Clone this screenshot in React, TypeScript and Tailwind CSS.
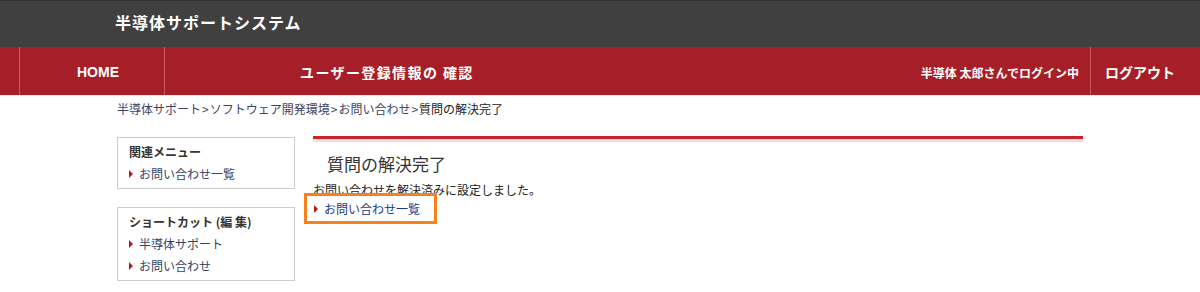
const jp = "font-['Noto_Sans_CJK_JP','Noto_Sans',sans-serif]";

const Tri = () => (
  <span className="mr-[6px] inline-block h-0 w-0 border-y-[4px] border-l-[4px] border-y-transparent border-l-[#c0141c]" />
);

const SideBox = ({ title, items }: { title: string; items: string[] }) => (
  <div className="border border-[#cccccc] px-[11px] pt-[3px] pb-[3px]">
    <div className="text-[12px] font-bold leading-[22px] text-[#333333]">{title}</div>
    {items.map((item) => (
      <div key={item} className="flex items-center text-[12px] leading-[22px] text-[#334466]">
        <Tri />
        {item}
      </div>
    ))}
  </div>
);

const crumbs = ["半導体サポート", "ソフトウェア開発環境", "お問い合わせ"];

export default function App() {
  return (
    <div className={`${jp} min-h-[292px] bg-white`}>
      {/* top header */}
      <div className="h-[47px] border-t border-[#333333] bg-[#404040]">
        <div className="mx-auto w-[970px] text-[16px] font-bold leading-[43px] tracking-[1px] text-white">
          半導体サポートシステム
        </div>
      </div>

      {/* nav */}
      <div className="flex h-[49px] border-b border-[#e8e8e8] bg-[#a61e27] font-bold text-white">
        <div className="w-[20px] border-r border-[#c85a60]" />
        <div className="flex w-[145px] items-center justify-center border-r border-[#c85a60] pt-[3px] pl-[12px] font-['Liberation_Sans',sans-serif] text-[14px]">
          HOME
        </div>
        <div className="flex items-center pt-[3px] pl-[135px] text-[14px] tracking-[1.4px]">ユーザー登録情報の 確認</div>
        <div className="flex-1" />
        <div className="flex items-center pt-[3px] pr-[11px] text-[12px]">半導体 太郎さんでログイン中</div>
        <div className="flex w-[110px] items-center border-l border-[#c85a60] pt-[3px] pl-[14px] text-[14px]">
          ログアウト
        </div>
      </div>

      <div className="mx-auto w-[966px]">
        {/* breadcrumb */}
        <div className="pt-[5px] text-[12px] leading-[16px] text-[#3c4466]">
          {crumbs.map((c) => (
            <span key={c}>
              {c}
              <span className="mx-[1px]">&gt;</span>
            </span>
          ))}
          <span className="text-[#222222]">質問の解決完了</span>
        </div>

        <div className="mt-[20px] flex gap-[18px]">
          {/* sidebar */}
          <div className="flex w-[178px] flex-col gap-[18px]">
            <SideBox title="関連メニュー" items={["お問い合わせ一覧"]} />
            <SideBox title="ショートカット (編 集)" items={["半導体サポート", "お問い合わせ"]} />
          </div>

          {/* main */}
          <div className="-mt-[1px] w-[770px]">
            <div className="h-[3px] bg-[#cc2229]" />
            <div className="h-[3px] bg-[#fadcdd]" />
            <h1 className="pt-[10px] pl-[14px] text-[17px] leading-[24px] text-[#333333]">質問の解決完了</h1>
            <p className="mt-[6px] text-[12px] leading-[16px] text-[#222222]">
              お問い合わせを解決済みに設定しました。
            </p>
            <div className="relative -ml-[9px] -mt-[5px] flex h-[31px] w-[133px] items-center border-[3px] border-[#f5821f] bg-white pl-[7px] text-[12px] text-[#1a3c8c]">
              <Tri />
              お問い合わせ一覧
            </div>
          </div>
        </div>
      </div>
    </div>
  );
}
